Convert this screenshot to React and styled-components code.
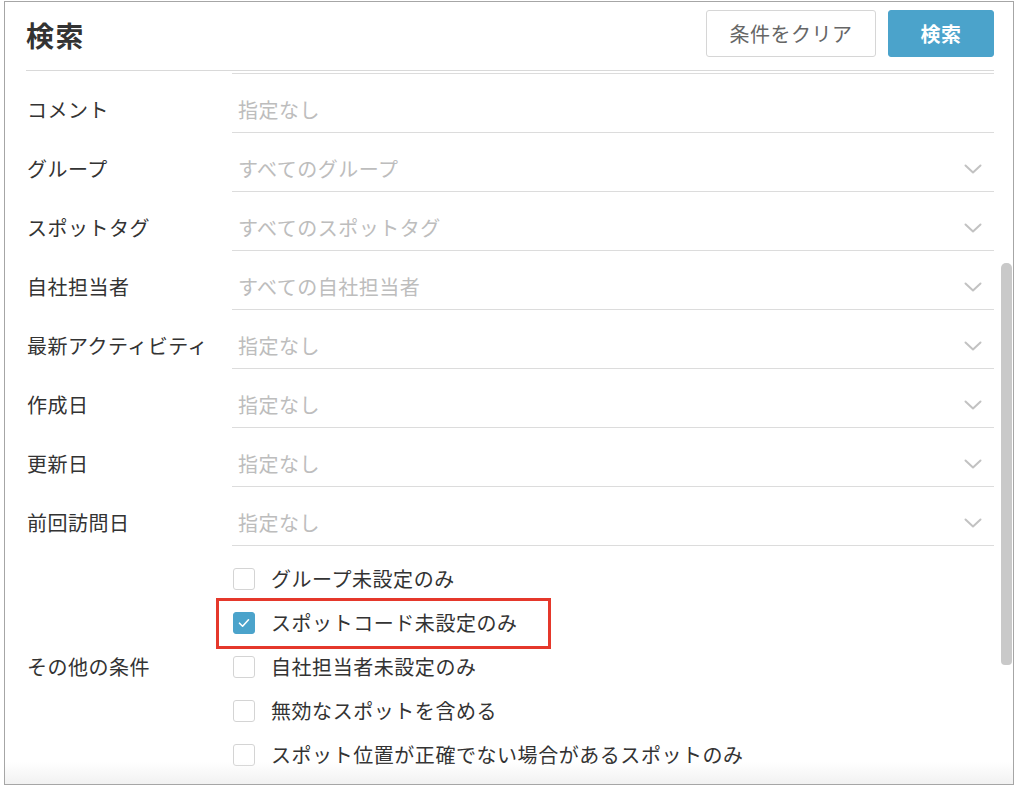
import React from "react";
import styled, { createGlobalStyle } from "styled-components";

const GlobalStyle = createGlobalStyle`
  body {
    margin: 0;
    background: #fff;
    font-family: "Noto Sans CJK JP", "Noto Sans", sans-serif;
    color: #333;
  }
`;

const StyledFrame = styled.div`
  position: relative;
  box-sizing: border-box;
  width: 1010px;
  height: 784px;
  margin: 1px 0 0 4px;
  border: 1px solid #a6a6a6;
  overflow: hidden;
  background: #fff;
`;

const StyledHeader = styled.div`
  display: flex;
  align-items: center;
  justify-content: space-between;
  height: 47px;
  margin: 8px 19px 0 21px;
  padding-bottom: 13px;
  border-bottom: 1px solid #d9d9d9;
`;

const StyledTitle = styled.h1`
  margin: 2px 0 0 0;
  font-size: 28px;
  font-weight: 700;
  letter-spacing: 1.5px;
  color: #333;
`;

const StyledActions = styled.div`
  display: flex;
  gap: 12px;
`;

const StyledButton = styled.button`
  box-sizing: border-box;
  height: 47px;
  width: ${props => props.width}px;
  border-radius: 3px;
  font-family: inherit;
  font-size: 20px;
  letter-spacing: 0.5px;
  border: 1px solid ${props => (props.primary ? "#4ba3cb" : "#d6d6d6")};
  background: ${props => (props.primary ? "#4ba3cb" : "#fff")};
  color: ${props => (props.primary ? "#fff" : "#666")};
  font-weight: ${props => (props.primary ? 700 : 400)};
  padding: 0;
`;

const StyledBody = styled.div`
  margin: 0 19px 0 21px;
`;

const StyledTopEdge = styled.div`
  height: 2px;
  margin-left: 206px;
  border-bottom: 1px solid #dcdcdc;
`;

const StyledRow = styled.div`
  display: grid;
  grid-template-columns: 206px 1fr;
  align-items: center;
  padding-top: 14px;
`;

const StyledLabel = styled.div`
  font-size: 20px;
  letter-spacing: 0.5px;
  color: #333;
  padding: 0 0 2px 1px;
  white-space: nowrap;
`;

const StyledField = styled.div`
  display: flex;
  align-items: center;
  justify-content: space-between;
  height: 44px;
  padding: 0 12px 0 6px;
  border-bottom: 1px solid #dcdcdc;
  font-size: 20px;
  letter-spacing: 0.5px;
  color: #bdbdbd;

  & > span {
    padding-bottom: 2px;
  }
`;

const StyledOther = styled.div`
  display: grid;
  grid-template-columns: 206px 1fr;
  align-items: center;
  padding-top: 11px;
`;

const StyledCheckList = styled.div`
  display: flex;
  flex-direction: column;
`;

const StyledCheckRow = styled.div`
  position: relative;
  display: flex;
  align-items: center;
  gap: 16px;
  height: 44px;
  padding-left: 1px;
  font-size: 20px;
  letter-spacing: 0.55px;
  color: #333;

  & > span:nth-child(2) {
    padding-bottom: 2px;
  }
`;

const StyledBox = styled.span`
  box-sizing: border-box;
  display: flex;
  align-items: center;
  justify-content: center;
  width: 22px;
  height: 22px;
  border-radius: 3px;
  border: 1px solid ${props => (props.checked ? "#4ba3cb" : "#d4d4d4")};
  background: ${props => (props.checked ? "#4ba3cb" : "#fff")};
`;

const StyledHighlight = styled.span`
  position: absolute;
  top: -3px;
  bottom: -4px;
  left: -16px;
  width: 335px;
  box-sizing: border-box;
  border: 3px solid #e5382b;
  pointer-events: none;
`;

const StyledThumb = styled.div`
  position: absolute;
  top: 261px;
  right: 1px;
  width: 11px;
  height: 402px;
  border-radius: 5px 5px 4px 4px;
  background: #c9c9c9;
`;

const StyledFade = styled.div`
  position: absolute;
  left: 0;
  right: 0;
  bottom: 0;
  height: 22px;
  background: linear-gradient(rgba(245, 245, 245, 0), rgba(240, 240, 240, 0.9));
  pointer-events: none;
`;

const Chevron = () => (
  <svg width="18" height="10" viewBox="0 0 18 10" fill="none">
    <path
      d="M1.5 1.5 L9 8.5 L16.5 1.5"
      stroke="#c2c2c2"
      strokeWidth="2"
      strokeLinecap="round"
      strokeLinejoin="round"
    />
  </svg>
);

const Check = () => (
  <svg width="14" height="14" viewBox="0 0 14 14" fill="none">
    <path
      d="M2.5 7.2 L5.6 10.2 L11.5 3.8"
      stroke="#fff"
      strokeWidth="1.6"
      strokeLinecap="round"
      strokeLinejoin="round"
    />
  </svg>
);

const fields = [
  { label: "コメント", value: "指定なし", select: false },
  { label: "グループ", value: "すべてのグループ", select: true },
  { label: "スポットタグ", value: "すべてのスポットタグ", select: true },
  { label: "自社担当者", value: "すべての自社担当者", select: true },
  { label: "最新アクティビティ", value: "指定なし", select: true },
  { label: "作成日", value: "指定なし", select: true },
  { label: "更新日", value: "指定なし", select: true },
  { label: "前回訪問日", value: "指定なし", select: true }
];

const options = [
  { text: "グループ未設定のみ", checked: false },
  { text: "スポットコード未設定のみ", checked: true, marked: true },
  { text: "自社担当者未設定のみ", checked: false },
  { text: "無効なスポットを含める", checked: false },
  { text: "スポット位置が正確でない場合があるスポットのみ", checked: false }
];

const App = () => (
  <>
    <GlobalStyle />
    <StyledFrame>
      <StyledHeader>
        <StyledTitle>検索</StyledTitle>
        <StyledActions>
          <StyledButton width={170}>条件をクリア</StyledButton>
          <StyledButton width={106} primary>
            検索
          </StyledButton>
        </StyledActions>
      </StyledHeader>
      <StyledBody>
        <StyledTopEdge />
        {fields.map(field => (
          <StyledRow key={field.label}>
            <StyledLabel>{field.label}</StyledLabel>
            <StyledField>
              <span>{field.value}</span>
              {field.select && <Chevron />}
            </StyledField>
          </StyledRow>
        ))}
        <StyledOther>
          <StyledLabel>その他の条件</StyledLabel>
          <StyledCheckList>
            {options.map(option => (
              <StyledCheckRow key={option.text}>
                <StyledBox checked={option.checked}>
                  {option.checked && <Check />}
                </StyledBox>
                <span>{option.text}</span>
                {option.marked && <StyledHighlight />}
              </StyledCheckRow>
            ))}
          </StyledCheckList>
        </StyledOther>
      </StyledBody>
      <StyledThumb />
      <StyledFade />
    </StyledFrame>
  </>
);

export default App;
